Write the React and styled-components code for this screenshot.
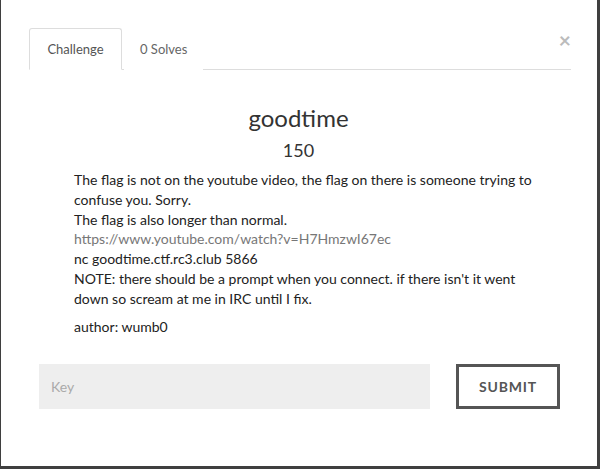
import React from "react";
import styled, { createGlobalStyle } from "styled-components";

const GlobalStyle = createGlobalStyle`
  html, body {
    margin: 0;
    padding: 0;
    background: #3f3f3f;
    font-family: Lato, "Open Sans", sans-serif;
  }
`;

const Modal = styled.div`
  position: relative;
  box-sizing: border-box;
  margin-left: 1px;
  width: 596px;
  height: 466px;
  background: #fff;
  padding: 28px 29px 0 28px;
  color: #333;
`;

const Close = styled.button`
  position: absolute;
  top: 29px;
  right: 26px;
  border: none;
  background: none;
  padding: 0;
  font-family: Lato, sans-serif;
  font-size: 21px;
  font-weight: 700;
  line-height: 1;
  color: #bbb;
  cursor: pointer;
`;

const Tabs = styled.div`
  display: flex;
  border-bottom: 1px solid #ddd;
  width: 542px;
`;

const Tab = styled.div`
  box-sizing: border-box;
  height: 42px;
  padding: 0 15px;
  margin-bottom: -1px;
  display: flex;
  align-items: center;
  justify-content: center;
  font-size: 13px;
  color: ${(p) => (p.active ? "#555" : "#666")};
  border: 1px solid ${(p) => (p.active ? "#ddd" : "transparent")};
  border-bottom-color: ${(p) => (p.active ? "#fff" : "transparent")};
  border-radius: 3px 3px 0 0;
  background: #fff;
  min-width: ${(p) => (p.active ? "93px" : "auto")};
  margin-right: 2px;
`;

const Title = styled.h3`
  margin: 33px 0 0;
  text-align: center;
  font-size: 24px;
  font-weight: 400;
  line-height: 30px;
  color: #333;
`;

const Points = styled.h4`
  margin: 5px 0 0;
  text-align: center;
  font-size: 18px;
  font-weight: 400;
  line-height: 24px;
  color: #333;
`;

const Description = styled.div`
  margin: 8px 0 0 45px;
  width: 490px;
  font-size: 14px;
  line-height: 19.8px;
  color: #222;

  p {
    margin: 0;
  }

  a {
    color: #777;
    text-decoration: none;
  }
`;

const Author = styled.p`
  margin: 8px 0 0 45px;
  font-size: 14px;
  line-height: 20px;
  color: #222;
`;

const SubmitRow = styled.form`
  display: flex;
  align-items: stretch;
  margin: 27px 0 0 10px;
  gap: 26px;
`;

const KeyInput = styled.input`
  box-sizing: border-box;
  flex-shrink: 0;
  width: 391px;
  height: 45px;
  border: none;
  background: #eee;
  padding: 0 12px;
  font-family: Lato, sans-serif;
  font-size: 14px;
  color: #333;
  outline: none;

  &::placeholder {
    color: #aaa;
  }
`;

const SubmitButton = styled.button`
  box-sizing: border-box;
  flex-shrink: 0;
  width: 104px;
  height: 45px;
  border: 3px solid #555;
  background: #fff;
  font-family: Lato, sans-serif;
  font-size: 14px;
  font-weight: 700;
  letter-spacing: 0.8px;
  color: #555;
  cursor: pointer;
`;

export default function App() {
  return (
    <>
      <GlobalStyle />
      <Modal>
        <Close aria-label="close">×</Close>
        <Tabs>
          <Tab active>Challenge</Tab>
          <Tab>0 Solves</Tab>
        </Tabs>
        <Title>goodtime</Title>
        <Points>150</Points>
        <Description>
          <p>
            The flag is not on the youtube video, the flag on there is someone trying to
            <br />
            confuse you. Sorry.
            <br />
            The flag is also longer than normal.
            <br />
            <a href="#">https://www.youtube.com/watch?v=H7HmzwI67ec</a>
            <br />
            nc goodtime.ctf.rc3.club 5866
            <br />
            NOTE: there should be a prompt when you connect. if there isn't it went
            <br />
            down so scream at me in IRC until I fix.
          </p>
        </Description>
        <Author>author: wumb0</Author>
        <SubmitRow onSubmit={(e) => e.preventDefault()}>
          <KeyInput placeholder="Key" />
          <SubmitButton type="submit">SUBMIT</SubmitButton>
        </SubmitRow>
      </Modal>
    </>
  );
}
